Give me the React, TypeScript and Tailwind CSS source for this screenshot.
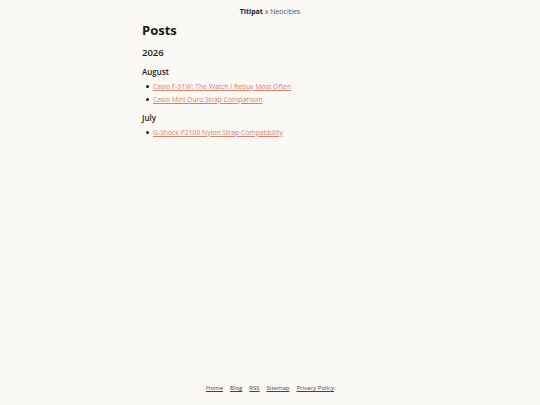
const august = [
  "Casio F-91W: The Watch I Rebuy Most Often",
  "Casio Mini Duro Strap Comparison",
];
const july = ["G-Shock P2100 Nylon Strap Compatibility"];

function PostList({ items }: { items: string[] }) {
  return (
    <ul className="mt-[1.5px] text-[6.8px] leading-[13px]">
      {items.map((t) => (
        <li key={t} className="flex items-center">
          <span className="ml-[4px] mr-[4px] w-[3px] h-[3px] rounded-full bg-[#1a1a1a]" />
          <a
            href="#"
            className="text-[#d9806a] underline decoration-[0.5px] underline-offset-[1px]"
          >
            {t}
          </a>
        </li>
      ))}
    </ul>
  );
}

export default function App() {
  return (
    <div
      className="flex flex-col min-h-screen w-full bg-[#faf9f6] text-[#1a1a1a]"
      style={{ fontFamily: '"Open Sans", sans-serif' }}
    >
      {/* Header */}
      <header className="pt-[6px] text-center text-[7px] leading-[12px]">
        <span className="font-bold">Titipat</span>
        <span className="text-[#555]"> x Neocities</span>
      </header>

      {/* Main */}
      <main className="flex-1 w-[256px] mx-auto">
        <h1 className="mt-[3px] text-[13px] leading-[18px] font-bold">Posts</h1>
        <h2 className="mt-[7px] text-[9.5px] leading-[14px] font-semibold">2026</h2>

        <h3 className="mt-[6px] text-[8px] leading-[12px] font-semibold">August</h3>
        <PostList items={august} />

        <h3 className="mt-[6.5px] text-[8px] leading-[12px] font-semibold">July</h3>
        <PostList items={july} />
      </main>

      {/* Footer */}
      <footer className="pb-[12px] flex justify-center gap-[7px] text-[6px] leading-[10px] text-[#444]">
        <a href="#" className="underline decoration-[0.5px] underline-offset-[1px]">Home</a>
        <a href="#" className="underline decoration-[0.5px] underline-offset-[1px]">Blog</a>
        <a href="#" className="underline decoration-[0.5px] underline-offset-[1px]">RSS</a>
        <a href="#" className="underline decoration-[0.5px] underline-offset-[1px]">Sitemap</a>
        <a href="#" className="underline decoration-[0.5px] underline-offset-[1px]">Privacy Policy</a>
      </footer>
    </div>
  );
}
